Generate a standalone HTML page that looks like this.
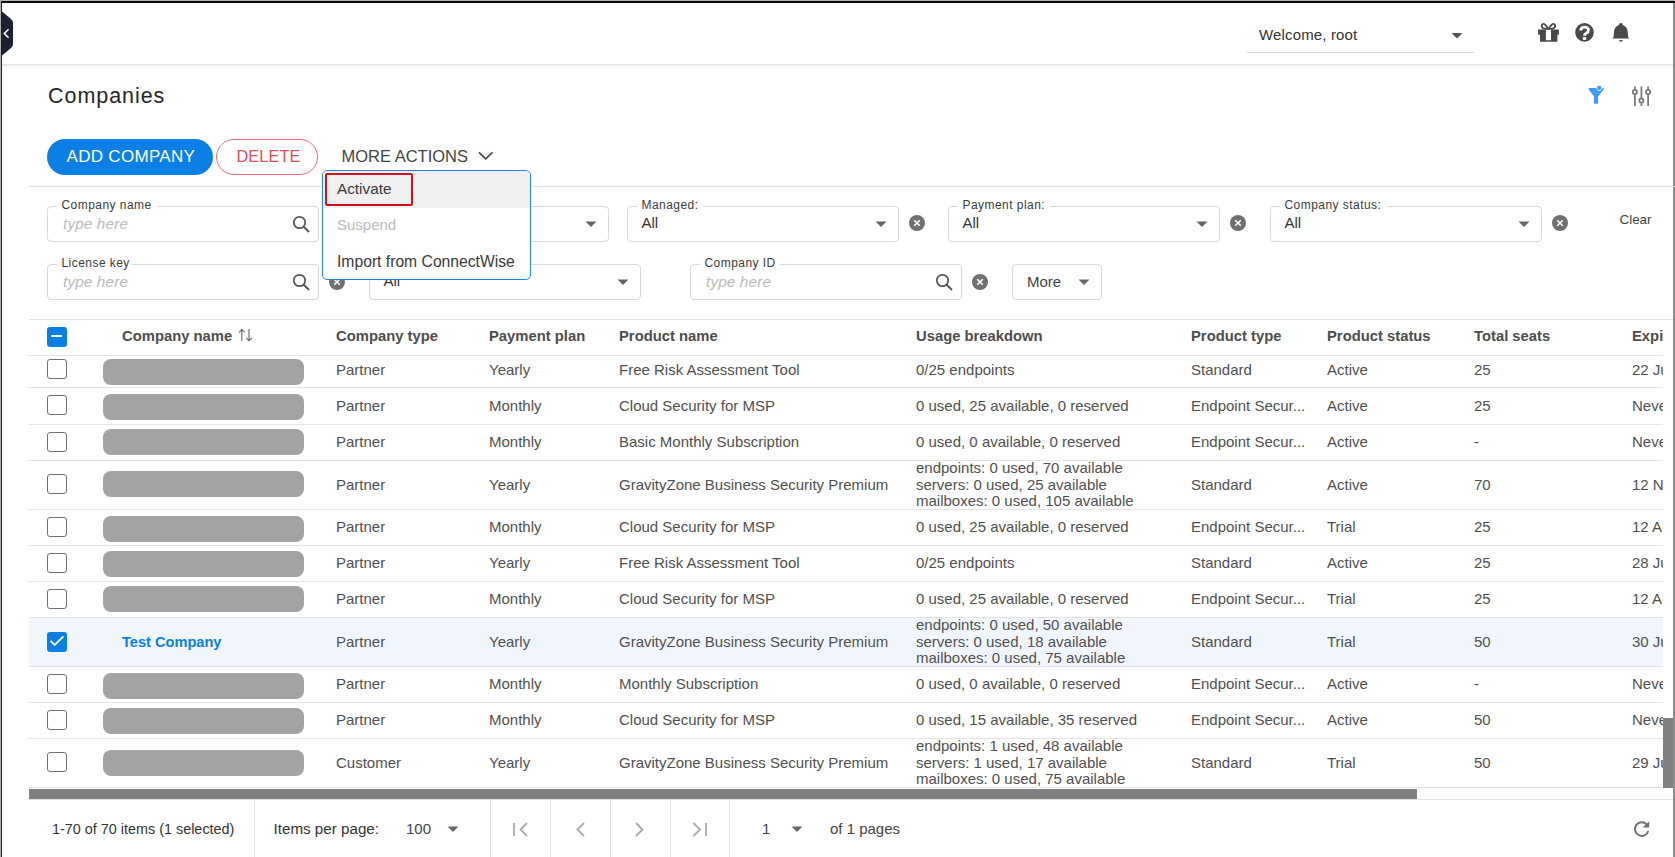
<!DOCTYPE html>
<html><head><meta charset="utf-8"><title>Companies</title>
<style>
html,body{margin:0;padding:0;background:#fff;}
body{width:1675px;height:857px;overflow:hidden;position:relative;font-family:"Liberation Sans", sans-serif;}
.t{position:absolute;white-space:nowrap;}
.b{position:absolute;}
</style></head><body>
<div class="b" style="left:0px;top:0px;width:1675px;height:1px;background:#b4b4b4"></div>
<div class="b" style="left:0px;top:1px;width:1675px;height:2px;background:#0a0a10"></div>
<div class="b" style="left:0px;top:0px;width:1px;height:857px;background:#b0b0b0"></div>
<div class="b" style="left:1px;top:1px;width:1px;height:856px;background:#1b2130"></div>
<div class="b" style="left:1673px;top:3px;width:2px;height:854px;background:#8a8a8a"></div>
<svg class="b" style="left:0;top:0" width="20" height="70"><path d="M1.5 11 L11 19 Q13 21 13 23 L13 44 Q13 46 11 48 L1.5 56 Z" fill="#1b2130"/><path d="M8.6 29.3 L4.3 33.5 L8.6 37.7" stroke="#fff" stroke-width="1.6" fill="none"/></svg>
<div class="b" style="left:2px;top:64px;width:1671px;height:1px;background:#e4e4e4"></div>
<div class="b" style="left:2px;top:65px;width:1671px;height:1px;background:#f2f2f2"></div>
<div class="b" style="left:2px;top:66px;width:1671px;height:1px;background:#f7f7f7"></div>
<div class="b" style="left:2px;top:67px;width:1671px;height:1px;background:#fbfbfb"></div>
<div class="t" style="left:1259px;top:25.40px;font-size:15px;line-height:20px;color:#333;font-weight:normal;font-style:normal;letter-spacing:0.15px;">Welcome, root</div>
<div class="b" style="left:1247px;top:52px;width:227px;height:1px;background:#d6d6d6"></div>
<svg class="b" style="left:1450px;top:32px" width="14" height="8"><path d="M1.5 1 L12.5 1 L7 6.5 Z" fill="#555"/></svg>
<svg class="b" style="left:1536px;top:21px" width="26" height="24" viewBox="0 0 26 24">
<path d="M12.4 7.9 C10.5 5 8.6 2.8 7.2 2.9 C5.6 3 5.4 5.5 6.4 6.7 C7.4 7.9 9.5 7.9 12.4 7.9 Z" fill="none" stroke="#4a4a4a" stroke-width="1.9" stroke-linejoin="round"/>
<path d="M12.5 7.9 C14.4 5 16.3 2.8 17.7 2.9 C19.3 3 19.5 5.5 18.5 6.7 C17.5 7.9 15.4 7.9 12.5 7.9 Z" fill="none" stroke="#4a4a4a" stroke-width="1.9" stroke-linejoin="round"/>
<path d="M2.1 8.5 H22.9 V13.7 H21.4 V20.7 H4 V13.7 H2.1 Z M9.9 8.5 V19.2 H15 V8.5 Z" fill="#4a4a4a" fill-rule="evenodd"/>
</svg>
<svg class="b" style="left:1574px;top:22px" width="21" height="21" viewBox="0 0 21 21">
<circle cx="10.5" cy="10.4" r="9.3" fill="#4a4a4a"/>
<path d="M6.8 8.4 C6.8 6.2 8.4 5.1 10.6 5.1 C12.9 5.1 14.5 6.3 14.5 8.2 C14.5 10 13.3 10.7 12.2 11.3 C11 12 10.5 12.5 10.5 13.8" stroke="#fff" stroke-width="2.8" fill="none"/>
<rect x="8.85" y="15.1" width="3.3" height="2.9" fill="#fff"/>
</svg>
<svg class="b" style="left:1610px;top:21px" width="22" height="23" viewBox="0 0 22 23">
<path d="M4.05 10.6 A6.8 6.8 0 0 1 17.65 10.6 L18.2 15.8 L19 17.6 L2.7 17.6 L3.5 15.8 Z" fill="#4a4a4a"/><circle cx="10.85" cy="4" r="1.95" fill="#4a4a4a"/>
<path d="M9.1 19 L12.8 19 Q12.8 20.7 10.95 20.7 Q9.1 20.7 9.1 19 Z" fill="#4a4a4a"/>
</svg>
<div class="t" style="left:48px;top:81.75px;font-size:21.5px;line-height:28px;color:#262626;font-weight:normal;font-style:normal;letter-spacing:0.95px;">Companies</div>
<svg class="b" style="left:1586px;top:84px" width="22" height="23" viewBox="0 0 22 23">
<path d="M2.6 4.4 Q2.6 3.9 3.1 3.9 L10.1 3.9 L11.6 6.3 Q12.1 6.9 13.2 6.9 Q14.6 6.9 15.1 6.2 L16.3 4.3 Q16.8 3.8 17.5 4.2 Q18.2 4.8 17.7 5.5 L12.1 12.6 L12.1 19 Q12.1 19.8 11.3 19.8 L8.8 19.8 Q8 19.8 8 19 L8 12.6 L2.7 5.2 Z" fill="#3d9bf5"/>
<circle cx="13.2" cy="3.9" r="2.1" fill="#3d9bf5"/>
</svg>
<svg class="b" style="left:1630px;top:84px" width="24" height="24" viewBox="0 0 24 24">
<g stroke="#777" stroke-width="1.75" fill="none">
<path d="M4.9 2.4 V5.2 M4.9 10.8 V21.9"/><circle cx="4.9" cy="8" r="2.1"/>
<path d="M11.4 2.4 V13.7 M11.4 19.3 V21.9"/><circle cx="11.4" cy="16.5" r="2.1"/>
<path d="M18.1 2.4 V5.2 M18.1 10.8 V21.9"/><circle cx="18.1" cy="8" r="2.1"/>
</g></svg>
<div class="b" style="left:47px;top:139px;width:166px;height:36px;background:#0a7fe5;border-radius:18px"></div>
<div class="t" style="left:66.5px;top:146.31px;font-size:17px;line-height:22px;color:#fff;font-weight:normal;font-style:normal;letter-spacing:0.3px;">ADD COMPANY</div>
<div class="b" style="left:216px;top:139px;width:102px;height:36px;border:1px solid #ef6b73;border-radius:18px;box-sizing:border-box"></div>
<div class="t" style="left:236.5px;top:146.49px;font-size:16.2px;line-height:21px;color:#e34b55;font-weight:normal;font-style:normal;letter-spacing:0.15px;">DELETE</div>
<div class="t" style="left:341.5px;top:145.78px;font-size:16.5px;line-height:21px;color:#444;font-weight:normal;font-style:normal;letter-spacing:0px;">MORE ACTIONS</div>
<svg class="b" style="left:476px;top:148px" width="20" height="14"><path d="M3 4.4 L9.7 10.9 L16.5 4.4" stroke="#444" stroke-width="1.6" fill="none"/></svg>
<div class="b" style="left:29px;top:186px;width:1646px;height:1px;background:#e2e2e2"></div>
<div class="b" style="left:47px;top:206px;width:272px;height:36px;border:1px solid #d9d9d9;border-radius:4px;box-sizing:border-box"></div>
<div class="b" style="left:57px;top:204px;width:100px;height:4px;background:#fff"></div>
<div class="t" style="left:61.5px;top:196.84px;font-size:12px;line-height:16px;color:#3c3c3c;font-weight:normal;font-style:normal;letter-spacing:0.45px;">Company name</div>
<div class="t" style="left:63px;top:213.86px;font-size:15.4px;line-height:20px;color:#bbb;font-weight:normal;font-style:italic;letter-spacing:0.1px;">type here</div>
<svg class="b" style="left:292px;top:215px" width="20" height="20" viewBox="0 0 20 20"><circle cx="7.5" cy="7.5" r="5.7" stroke="#555" stroke-width="1.7" fill="none"/><path d="M11.6 11.6 L17 17" stroke="#555" stroke-width="2"/></svg>
<div class="b" style="left:337px;top:206px;width:272px;height:36px;border:1px solid #d9d9d9;border-radius:4px;box-sizing:border-box"></div>
<div class="t" style="left:351.5px;top:212.80px;font-size:15px;line-height:20px;color:#333;font-weight:normal;font-style:normal;letter-spacing:0px;">All</div>
<svg class="b" style="left:585px;top:220.5px" width="13" height="7"><path d="M0.5 0.5 L11.5 0.5 L6 6 Z" fill="#666"/></svg>
<div class="b" style="left:627px;top:206px;width:272px;height:36px;border:1px solid #d9d9d9;border-radius:4px;box-sizing:border-box"></div>
<div class="b" style="left:637px;top:204px;width:66px;height:4px;background:#fff"></div>
<div class="t" style="left:641.5px;top:196.84px;font-size:12px;line-height:16px;color:#3c3c3c;font-weight:normal;font-style:normal;letter-spacing:0.45px;">Managed:</div>
<div class="t" style="left:641.5px;top:212.80px;font-size:15px;line-height:20px;color:#333;font-weight:normal;font-style:normal;letter-spacing:0px;">All</div>
<svg class="b" style="left:875px;top:220.5px" width="13" height="7"><path d="M0.5 0.5 L11.5 0.5 L6 6 Z" fill="#666"/></svg>
<svg class="b" style="left:908px;top:214px" width="18" height="18" viewBox="0 0 18 18"><circle cx="9" cy="9" r="8" fill="#707070"/><path d="M6.2 6.2 L11.8 11.8 M11.8 6.2 L6.2 11.8" stroke="#fff" stroke-width="1.6"/></svg>
<div class="b" style="left:948px;top:206px;width:272px;height:36px;border:1px solid #d9d9d9;border-radius:4px;box-sizing:border-box"></div>
<div class="b" style="left:958px;top:204px;width:92px;height:4px;background:#fff"></div>
<div class="t" style="left:962.5px;top:196.84px;font-size:12px;line-height:16px;color:#3c3c3c;font-weight:normal;font-style:normal;letter-spacing:0.45px;">Payment plan:</div>
<div class="t" style="left:962.5px;top:212.80px;font-size:15px;line-height:20px;color:#333;font-weight:normal;font-style:normal;letter-spacing:0px;">All</div>
<svg class="b" style="left:1196px;top:220.5px" width="13" height="7"><path d="M0.5 0.5 L11.5 0.5 L6 6 Z" fill="#666"/></svg>
<svg class="b" style="left:1229px;top:214px" width="18" height="18" viewBox="0 0 18 18"><circle cx="9" cy="9" r="8" fill="#707070"/><path d="M6.2 6.2 L11.8 11.8 M11.8 6.2 L6.2 11.8" stroke="#fff" stroke-width="1.6"/></svg>
<div class="b" style="left:1270px;top:206px;width:272px;height:36px;border:1px solid #d9d9d9;border-radius:4px;box-sizing:border-box"></div>
<div class="b" style="left:1280px;top:204px;width:107px;height:4px;background:#fff"></div>
<div class="t" style="left:1284.5px;top:196.84px;font-size:12px;line-height:16px;color:#3c3c3c;font-weight:normal;font-style:normal;letter-spacing:0.45px;">Company status:</div>
<div class="t" style="left:1284.5px;top:212.80px;font-size:15px;line-height:20px;color:#333;font-weight:normal;font-style:normal;letter-spacing:0px;">All</div>
<svg class="b" style="left:1518px;top:220.5px" width="13" height="7"><path d="M0.5 0.5 L11.5 0.5 L6 6 Z" fill="#666"/></svg>
<svg class="b" style="left:1551px;top:214px" width="18" height="18" viewBox="0 0 18 18"><circle cx="9" cy="9" r="8" fill="#707070"/><path d="M6.2 6.2 L11.8 11.8 M11.8 6.2 L6.2 11.8" stroke="#fff" stroke-width="1.6"/></svg>
<div class="t" style="left:1619.5px;top:211.16px;font-size:13.4px;line-height:17px;color:#444;font-weight:normal;font-style:normal;letter-spacing:0px;">Clear</div>
<div class="b" style="left:47px;top:264px;width:272px;height:36px;border:1px solid #d9d9d9;border-radius:4px;box-sizing:border-box"></div>
<div class="b" style="left:57px;top:262px;width:74px;height:4px;background:#fff"></div>
<div class="t" style="left:61.5px;top:254.84px;font-size:12px;line-height:16px;color:#3c3c3c;font-weight:normal;font-style:normal;letter-spacing:0.45px;">License key</div>
<div class="t" style="left:63px;top:271.86px;font-size:15.4px;line-height:20px;color:#bbb;font-weight:normal;font-style:italic;letter-spacing:0.1px;">type here</div>
<svg class="b" style="left:292px;top:273px" width="20" height="20" viewBox="0 0 20 20"><circle cx="7.5" cy="7.5" r="5.7" stroke="#555" stroke-width="1.7" fill="none"/><path d="M11.6 11.6 L17 17" stroke="#555" stroke-width="2"/></svg>
<svg class="b" style="left:328px;top:273px" width="18" height="18" viewBox="0 0 18 18"><circle cx="9" cy="9" r="8" fill="#707070"/><path d="M6.2 6.2 L11.8 11.8 M11.8 6.2 L6.2 11.8" stroke="#fff" stroke-width="1.6"/></svg>
<div class="b" style="left:369px;top:264px;width:272px;height:36px;border:1px solid #d9d9d9;border-radius:4px;box-sizing:border-box"></div>
<div class="t" style="left:383.5px;top:270.80px;font-size:15px;line-height:20px;color:#333;font-weight:normal;font-style:normal;letter-spacing:0px;">All</div>
<svg class="b" style="left:617px;top:278.5px" width="13" height="7"><path d="M0.5 0.5 L11.5 0.5 L6 6 Z" fill="#666"/></svg>
<div class="b" style="left:690px;top:264px;width:272px;height:36px;border:1px solid #d9d9d9;border-radius:4px;box-sizing:border-box"></div>
<div class="b" style="left:700px;top:262px;width:80px;height:4px;background:#fff"></div>
<div class="t" style="left:704.5px;top:254.84px;font-size:12px;line-height:16px;color:#3c3c3c;font-weight:normal;font-style:normal;letter-spacing:0.45px;">Company ID</div>
<div class="t" style="left:706px;top:271.86px;font-size:15.4px;line-height:20px;color:#bbb;font-weight:normal;font-style:italic;letter-spacing:0.1px;">type here</div>
<svg class="b" style="left:935px;top:273px" width="20" height="20" viewBox="0 0 20 20"><circle cx="7.5" cy="7.5" r="5.7" stroke="#555" stroke-width="1.7" fill="none"/><path d="M11.6 11.6 L17 17" stroke="#555" stroke-width="2"/></svg>
<svg class="b" style="left:971px;top:273px" width="18" height="18" viewBox="0 0 18 18"><circle cx="9" cy="9" r="8" fill="#707070"/><path d="M6.2 6.2 L11.8 11.8 M11.8 6.2 L6.2 11.8" stroke="#fff" stroke-width="1.6"/></svg>
<div class="b" style="left:1012px;top:264px;width:90px;height:36px;border:1px solid #d9d9d9;border-radius:4px;box-sizing:border-box"></div>
<div class="t" style="left:1027px;top:271.80px;font-size:15px;line-height:20px;color:#444;font-weight:normal;font-style:normal;letter-spacing:0px;">More</div>
<svg class="b" style="left:1078px;top:279px" width="13" height="7"><path d="M0.5 0.5 L11.5 0.5 L6 6 Z" fill="#666"/></svg>
<div class="b" style="left:29px;top:319px;width:1644px;height:1px;background:#e2e2e2"></div>
<div class="b" style="left:0;top:0;width:1663px;height:857px;overflow:hidden">
<div class="b" style="left:47px;top:327px;width:20px;height:20px;background:#0a7fe5;border-radius:3px"></div>
<div class="b" style="left:51px;top:335px;width:11px;height:2px;background:#fff"></div>
<div class="t" style="left:122px;top:326.67px;font-size:14.8px;line-height:19px;color:#4d4d4d;font-weight:bold;font-style:normal;letter-spacing:0px;">Company name</div>
<div class="t" style="left:336px;top:326.67px;font-size:14.8px;line-height:19px;color:#4d4d4d;font-weight:bold;font-style:normal;letter-spacing:0px;">Company type</div>
<div class="t" style="left:489px;top:326.67px;font-size:14.8px;line-height:19px;color:#4d4d4d;font-weight:bold;font-style:normal;letter-spacing:0px;">Payment plan</div>
<div class="t" style="left:619px;top:326.67px;font-size:14.8px;line-height:19px;color:#4d4d4d;font-weight:bold;font-style:normal;letter-spacing:0px;">Product name</div>
<div class="t" style="left:916px;top:326.67px;font-size:14.8px;line-height:19px;color:#4d4d4d;font-weight:bold;font-style:normal;letter-spacing:0px;">Usage breakdown</div>
<div class="t" style="left:1191px;top:326.67px;font-size:14.8px;line-height:19px;color:#4d4d4d;font-weight:bold;font-style:normal;letter-spacing:0px;">Product type</div>
<div class="t" style="left:1327px;top:326.67px;font-size:14.8px;line-height:19px;color:#4d4d4d;font-weight:bold;font-style:normal;letter-spacing:0px;">Product status</div>
<div class="t" style="left:1474px;top:326.67px;font-size:14.8px;line-height:19px;color:#4d4d4d;font-weight:bold;font-style:normal;letter-spacing:0px;">Total seats</div>
<div class="t" style="left:1632px;top:326.67px;font-size:14.8px;line-height:19px;color:#4d4d4d;font-weight:bold;font-style:normal;letter-spacing:0px;">Expiry date</div>
<svg class="b" style="left:237px;top:328px" width="18" height="16"><path d="M4.8 13.3 V1.4 M2.1 4.3 L4.8 1.4 L7.6 4.3 M12 1 V12.8 M9.3 10 L12 12.8 L14.8 10" stroke="#6a6a6a" stroke-width="1.15" fill="none"/></svg>
<div class="b" style="left:29px;top:355px;width:1634px;height:1px;background:#dfe3ea"></div>
<div class="b" style="left:0;top:356px;width:1663px;height:433px;overflow:hidden">
<div class="b" style="left:0;top:-356px;width:1663px;height:857px">
<div class="b" style="left:47px;top:359px;width:20px;height:20px;border:1.8px solid #707070;border-radius:3px;box-sizing:border-box"></div>
<div class="b" style="left:103px;top:359px;width:201px;height:26px;background:#a3a3a3;border-radius:8px"></div>
<div class="t" style="left:336px;top:360.00px;font-size:15px;line-height:20px;color:#505050;font-weight:normal;font-style:normal;letter-spacing:0px;">Partner</div>
<div class="t" style="left:489px;top:360.00px;font-size:15px;line-height:20px;color:#505050;font-weight:normal;font-style:normal;letter-spacing:0px;">Yearly</div>
<div class="t" style="left:619px;top:360.00px;font-size:15px;line-height:20px;color:#505050;font-weight:normal;font-style:normal;letter-spacing:0px;">Free Risk Assessment Tool</div>
<div class="t" style="left:1191px;top:360.00px;font-size:15px;line-height:20px;color:#505050;font-weight:normal;font-style:normal;letter-spacing:0px;">Standard</div>
<div class="t" style="left:1327px;top:360.00px;font-size:15px;line-height:20px;color:#505050;font-weight:normal;font-style:normal;letter-spacing:0px;">Active</div>
<div class="t" style="left:1474px;top:360.00px;font-size:15px;line-height:20px;color:#505050;font-weight:normal;font-style:normal;letter-spacing:0px;">25</div>
<div class="t" style="left:1632px;top:360.00px;font-size:15px;line-height:20px;color:#505050;font-weight:normal;font-style:normal;letter-spacing:0px;">22 Jul 2024</div>
<div class="t" style="left:916px;top:360.00px;font-size:15px;line-height:20px;color:#505050;font-weight:normal;font-style:normal;letter-spacing:0px;">0/25 endpoints</div>
<div class="b" style="left:29px;top:387px;width:1634px;height:1px;background:#e4e4e4"></div>
<div class="b" style="left:47px;top:395px;width:20px;height:20px;border:1.8px solid #707070;border-radius:3px;box-sizing:border-box"></div>
<div class="b" style="left:103px;top:394px;width:201px;height:26px;background:#a3a3a3;border-radius:8px"></div>
<div class="t" style="left:336px;top:395.50px;font-size:15px;line-height:20px;color:#505050;font-weight:normal;font-style:normal;letter-spacing:0px;">Partner</div>
<div class="t" style="left:489px;top:395.50px;font-size:15px;line-height:20px;color:#505050;font-weight:normal;font-style:normal;letter-spacing:0px;">Monthly</div>
<div class="t" style="left:619px;top:395.50px;font-size:15px;line-height:20px;color:#505050;font-weight:normal;font-style:normal;letter-spacing:0px;">Cloud Security for MSP</div>
<div class="t" style="left:1191px;top:395.50px;font-size:15px;line-height:20px;color:#505050;font-weight:normal;font-style:normal;letter-spacing:0px;">Endpoint Secur...</div>
<div class="t" style="left:1327px;top:395.50px;font-size:15px;line-height:20px;color:#505050;font-weight:normal;font-style:normal;letter-spacing:0px;">Active</div>
<div class="t" style="left:1474px;top:395.50px;font-size:15px;line-height:20px;color:#505050;font-weight:normal;font-style:normal;letter-spacing:0px;">25</div>
<div class="t" style="left:1632px;top:395.50px;font-size:15px;line-height:20px;color:#505050;font-weight:normal;font-style:normal;letter-spacing:0px;">Never</div>
<div class="t" style="left:916px;top:395.50px;font-size:15px;line-height:20px;color:#505050;font-weight:normal;font-style:normal;letter-spacing:0px;">0 used, 25 available, 0 reserved</div>
<div class="b" style="left:29px;top:424px;width:1634px;height:1px;background:#e4e4e4"></div>
<div class="b" style="left:47px;top:432px;width:20px;height:20px;border:1.8px solid #707070;border-radius:3px;box-sizing:border-box"></div>
<div class="b" style="left:103px;top:429px;width:201px;height:26px;background:#a3a3a3;border-radius:8px"></div>
<div class="t" style="left:336px;top:432.00px;font-size:15px;line-height:20px;color:#505050;font-weight:normal;font-style:normal;letter-spacing:0px;">Partner</div>
<div class="t" style="left:489px;top:432.00px;font-size:15px;line-height:20px;color:#505050;font-weight:normal;font-style:normal;letter-spacing:0px;">Monthly</div>
<div class="t" style="left:619px;top:432.00px;font-size:15px;line-height:20px;color:#505050;font-weight:normal;font-style:normal;letter-spacing:0px;">Basic Monthly Subscription</div>
<div class="t" style="left:1191px;top:432.00px;font-size:15px;line-height:20px;color:#505050;font-weight:normal;font-style:normal;letter-spacing:0px;">Endpoint Secur...</div>
<div class="t" style="left:1327px;top:432.00px;font-size:15px;line-height:20px;color:#505050;font-weight:normal;font-style:normal;letter-spacing:0px;">Active</div>
<div class="t" style="left:1474px;top:432.00px;font-size:15px;line-height:20px;color:#505050;font-weight:normal;font-style:normal;letter-spacing:0px;">-</div>
<div class="t" style="left:1632px;top:432.00px;font-size:15px;line-height:20px;color:#505050;font-weight:normal;font-style:normal;letter-spacing:0px;">Never</div>
<div class="t" style="left:916px;top:432.00px;font-size:15px;line-height:20px;color:#505050;font-weight:normal;font-style:normal;letter-spacing:0px;">0 used, 0 available, 0 reserved</div>
<div class="b" style="left:29px;top:460px;width:1634px;height:1px;background:#e4e4e4"></div>
<div class="b" style="left:47px;top:474px;width:20px;height:20px;border:1.8px solid #707070;border-radius:3px;box-sizing:border-box"></div>
<div class="b" style="left:103px;top:471px;width:201px;height:26px;background:#a3a3a3;border-radius:8px"></div>
<div class="t" style="left:336px;top:474.50px;font-size:15px;line-height:20px;color:#505050;font-weight:normal;font-style:normal;letter-spacing:0px;">Partner</div>
<div class="t" style="left:489px;top:474.50px;font-size:15px;line-height:20px;color:#505050;font-weight:normal;font-style:normal;letter-spacing:0px;">Yearly</div>
<div class="t" style="left:619px;top:474.50px;font-size:15px;line-height:20px;color:#505050;font-weight:normal;font-style:normal;letter-spacing:0px;">GravityZone Business Security Premium</div>
<div class="t" style="left:1191px;top:474.50px;font-size:15px;line-height:20px;color:#505050;font-weight:normal;font-style:normal;letter-spacing:0px;">Standard</div>
<div class="t" style="left:1327px;top:474.50px;font-size:15px;line-height:20px;color:#505050;font-weight:normal;font-style:normal;letter-spacing:0px;">Active</div>
<div class="t" style="left:1474px;top:474.50px;font-size:15px;line-height:20px;color:#505050;font-weight:normal;font-style:normal;letter-spacing:0px;">70</div>
<div class="t" style="left:1632px;top:474.50px;font-size:15px;line-height:20px;color:#505050;font-weight:normal;font-style:normal;letter-spacing:0px;">12 Nov 2024</div>
<div class="t" style="left:916px;top:458.40px;font-size:15px;line-height:20px;color:#505050;font-weight:normal;font-style:normal;letter-spacing:0px;">endpoints: 0 used, 70 available</div>
<div class="t" style="left:916px;top:474.50px;font-size:15px;line-height:20px;color:#505050;font-weight:normal;font-style:normal;letter-spacing:0px;">servers: 0 used, 25 available</div>
<div class="t" style="left:916px;top:490.60px;font-size:15px;line-height:20px;color:#505050;font-weight:normal;font-style:normal;letter-spacing:0px;">mailboxes: 0 used, 105 available</div>
<div class="b" style="left:29px;top:509px;width:1634px;height:1px;background:#e4e4e4"></div>
<div class="b" style="left:47px;top:517px;width:20px;height:20px;border:1.8px solid #707070;border-radius:3px;box-sizing:border-box"></div>
<div class="b" style="left:103px;top:516px;width:201px;height:26px;background:#a3a3a3;border-radius:8px"></div>
<div class="t" style="left:336px;top:517.00px;font-size:15px;line-height:20px;color:#505050;font-weight:normal;font-style:normal;letter-spacing:0px;">Partner</div>
<div class="t" style="left:489px;top:517.00px;font-size:15px;line-height:20px;color:#505050;font-weight:normal;font-style:normal;letter-spacing:0px;">Monthly</div>
<div class="t" style="left:619px;top:517.00px;font-size:15px;line-height:20px;color:#505050;font-weight:normal;font-style:normal;letter-spacing:0px;">Cloud Security for MSP</div>
<div class="t" style="left:1191px;top:517.00px;font-size:15px;line-height:20px;color:#505050;font-weight:normal;font-style:normal;letter-spacing:0px;">Endpoint Secur...</div>
<div class="t" style="left:1327px;top:517.00px;font-size:15px;line-height:20px;color:#505050;font-weight:normal;font-style:normal;letter-spacing:0px;">Trial</div>
<div class="t" style="left:1474px;top:517.00px;font-size:15px;line-height:20px;color:#505050;font-weight:normal;font-style:normal;letter-spacing:0px;">25</div>
<div class="t" style="left:1632px;top:517.00px;font-size:15px;line-height:20px;color:#505050;font-weight:normal;font-style:normal;letter-spacing:0px;">12 Aug 2024</div>
<div class="t" style="left:916px;top:517.00px;font-size:15px;line-height:20px;color:#505050;font-weight:normal;font-style:normal;letter-spacing:0px;">0 used, 25 available, 0 reserved</div>
<div class="b" style="left:29px;top:545px;width:1634px;height:1px;background:#e4e4e4"></div>
<div class="b" style="left:47px;top:553px;width:20px;height:20px;border:1.8px solid #707070;border-radius:3px;box-sizing:border-box"></div>
<div class="b" style="left:103px;top:551px;width:201px;height:26px;background:#a3a3a3;border-radius:8px"></div>
<div class="t" style="left:336px;top:553.00px;font-size:15px;line-height:20px;color:#505050;font-weight:normal;font-style:normal;letter-spacing:0px;">Partner</div>
<div class="t" style="left:489px;top:553.00px;font-size:15px;line-height:20px;color:#505050;font-weight:normal;font-style:normal;letter-spacing:0px;">Yearly</div>
<div class="t" style="left:619px;top:553.00px;font-size:15px;line-height:20px;color:#505050;font-weight:normal;font-style:normal;letter-spacing:0px;">Free Risk Assessment Tool</div>
<div class="t" style="left:1191px;top:553.00px;font-size:15px;line-height:20px;color:#505050;font-weight:normal;font-style:normal;letter-spacing:0px;">Standard</div>
<div class="t" style="left:1327px;top:553.00px;font-size:15px;line-height:20px;color:#505050;font-weight:normal;font-style:normal;letter-spacing:0px;">Active</div>
<div class="t" style="left:1474px;top:553.00px;font-size:15px;line-height:20px;color:#505050;font-weight:normal;font-style:normal;letter-spacing:0px;">25</div>
<div class="t" style="left:1632px;top:553.00px;font-size:15px;line-height:20px;color:#505050;font-weight:normal;font-style:normal;letter-spacing:0px;">28 Jul 2024</div>
<div class="t" style="left:916px;top:553.00px;font-size:15px;line-height:20px;color:#505050;font-weight:normal;font-style:normal;letter-spacing:0px;">0/25 endpoints</div>
<div class="b" style="left:29px;top:581px;width:1634px;height:1px;background:#e4e4e4"></div>
<div class="b" style="left:47px;top:589px;width:20px;height:20px;border:1.8px solid #707070;border-radius:3px;box-sizing:border-box"></div>
<div class="b" style="left:103px;top:586px;width:201px;height:26px;background:#a3a3a3;border-radius:8px"></div>
<div class="t" style="left:336px;top:589.00px;font-size:15px;line-height:20px;color:#505050;font-weight:normal;font-style:normal;letter-spacing:0px;">Partner</div>
<div class="t" style="left:489px;top:589.00px;font-size:15px;line-height:20px;color:#505050;font-weight:normal;font-style:normal;letter-spacing:0px;">Monthly</div>
<div class="t" style="left:619px;top:589.00px;font-size:15px;line-height:20px;color:#505050;font-weight:normal;font-style:normal;letter-spacing:0px;">Cloud Security for MSP</div>
<div class="t" style="left:1191px;top:589.00px;font-size:15px;line-height:20px;color:#505050;font-weight:normal;font-style:normal;letter-spacing:0px;">Endpoint Secur...</div>
<div class="t" style="left:1327px;top:589.00px;font-size:15px;line-height:20px;color:#505050;font-weight:normal;font-style:normal;letter-spacing:0px;">Trial</div>
<div class="t" style="left:1474px;top:589.00px;font-size:15px;line-height:20px;color:#505050;font-weight:normal;font-style:normal;letter-spacing:0px;">25</div>
<div class="t" style="left:1632px;top:589.00px;font-size:15px;line-height:20px;color:#505050;font-weight:normal;font-style:normal;letter-spacing:0px;">12 Aug 2024</div>
<div class="t" style="left:916px;top:589.00px;font-size:15px;line-height:20px;color:#505050;font-weight:normal;font-style:normal;letter-spacing:0px;">0 used, 25 available, 0 reserved</div>
<div class="b" style="left:29px;top:617px;width:1634px;height:1px;background:#e4e4e4"></div>
<div class="b" style="left:29px;top:618px;width:1634px;height:48px;background:#f1f6fd"></div>
<svg class="b" style="left:47px;top:632.1px" width="20" height="20"><rect width="20" height="20" rx="3" fill="#0a7fe5"/><path d="M3.6 8.9 L7.7 13 L16.4 4.4" stroke="#fff" stroke-width="1.9" fill="none"/></svg>
<div class="t" style="left:122px;top:632.94px;font-size:14.6px;line-height:19px;color:#0a7fe5;font-weight:bold;font-style:normal;letter-spacing:0px;">Test Company</div>
<div class="t" style="left:336px;top:631.50px;font-size:15px;line-height:20px;color:#505050;font-weight:normal;font-style:normal;letter-spacing:0px;">Partner</div>
<div class="t" style="left:489px;top:631.50px;font-size:15px;line-height:20px;color:#505050;font-weight:normal;font-style:normal;letter-spacing:0px;">Yearly</div>
<div class="t" style="left:619px;top:631.50px;font-size:15px;line-height:20px;color:#505050;font-weight:normal;font-style:normal;letter-spacing:0px;">GravityZone Business Security Premium</div>
<div class="t" style="left:1191px;top:631.50px;font-size:15px;line-height:20px;color:#505050;font-weight:normal;font-style:normal;letter-spacing:0px;">Standard</div>
<div class="t" style="left:1327px;top:631.50px;font-size:15px;line-height:20px;color:#505050;font-weight:normal;font-style:normal;letter-spacing:0px;">Trial</div>
<div class="t" style="left:1474px;top:631.50px;font-size:15px;line-height:20px;color:#505050;font-weight:normal;font-style:normal;letter-spacing:0px;">50</div>
<div class="t" style="left:1632px;top:631.50px;font-size:15px;line-height:20px;color:#505050;font-weight:normal;font-style:normal;letter-spacing:0px;">30 Jul 2024</div>
<div class="t" style="left:916px;top:615.40px;font-size:15px;line-height:20px;color:#505050;font-weight:normal;font-style:normal;letter-spacing:0px;">endpoints: 0 used, 50 available</div>
<div class="t" style="left:916px;top:631.50px;font-size:15px;line-height:20px;color:#505050;font-weight:normal;font-style:normal;letter-spacing:0px;">servers: 0 used, 18 available</div>
<div class="t" style="left:916px;top:647.60px;font-size:15px;line-height:20px;color:#505050;font-weight:normal;font-style:normal;letter-spacing:0px;">mailboxes: 0 used, 75 available</div>
<div class="b" style="left:29px;top:666px;width:1634px;height:1px;background:#e4e4e4"></div>
<div class="b" style="left:47px;top:674px;width:20px;height:20px;border:1.8px solid #707070;border-radius:3px;box-sizing:border-box"></div>
<div class="b" style="left:103px;top:673px;width:201px;height:26px;background:#a3a3a3;border-radius:8px"></div>
<div class="t" style="left:336px;top:674.00px;font-size:15px;line-height:20px;color:#505050;font-weight:normal;font-style:normal;letter-spacing:0px;">Partner</div>
<div class="t" style="left:489px;top:674.00px;font-size:15px;line-height:20px;color:#505050;font-weight:normal;font-style:normal;letter-spacing:0px;">Monthly</div>
<div class="t" style="left:619px;top:674.00px;font-size:15px;line-height:20px;color:#505050;font-weight:normal;font-style:normal;letter-spacing:0px;">Monthly Subscription</div>
<div class="t" style="left:1191px;top:674.00px;font-size:15px;line-height:20px;color:#505050;font-weight:normal;font-style:normal;letter-spacing:0px;">Endpoint Secur...</div>
<div class="t" style="left:1327px;top:674.00px;font-size:15px;line-height:20px;color:#505050;font-weight:normal;font-style:normal;letter-spacing:0px;">Active</div>
<div class="t" style="left:1474px;top:674.00px;font-size:15px;line-height:20px;color:#505050;font-weight:normal;font-style:normal;letter-spacing:0px;">-</div>
<div class="t" style="left:1632px;top:674.00px;font-size:15px;line-height:20px;color:#505050;font-weight:normal;font-style:normal;letter-spacing:0px;">Never</div>
<div class="t" style="left:916px;top:674.00px;font-size:15px;line-height:20px;color:#505050;font-weight:normal;font-style:normal;letter-spacing:0px;">0 used, 0 available, 0 reserved</div>
<div class="b" style="left:29px;top:702px;width:1634px;height:1px;background:#e4e4e4"></div>
<div class="b" style="left:47px;top:710px;width:20px;height:20px;border:1.8px solid #707070;border-radius:3px;box-sizing:border-box"></div>
<div class="b" style="left:103px;top:708px;width:201px;height:26px;background:#a3a3a3;border-radius:8px"></div>
<div class="t" style="left:336px;top:710.00px;font-size:15px;line-height:20px;color:#505050;font-weight:normal;font-style:normal;letter-spacing:0px;">Partner</div>
<div class="t" style="left:489px;top:710.00px;font-size:15px;line-height:20px;color:#505050;font-weight:normal;font-style:normal;letter-spacing:0px;">Monthly</div>
<div class="t" style="left:619px;top:710.00px;font-size:15px;line-height:20px;color:#505050;font-weight:normal;font-style:normal;letter-spacing:0px;">Cloud Security for MSP</div>
<div class="t" style="left:1191px;top:710.00px;font-size:15px;line-height:20px;color:#505050;font-weight:normal;font-style:normal;letter-spacing:0px;">Endpoint Secur...</div>
<div class="t" style="left:1327px;top:710.00px;font-size:15px;line-height:20px;color:#505050;font-weight:normal;font-style:normal;letter-spacing:0px;">Active</div>
<div class="t" style="left:1474px;top:710.00px;font-size:15px;line-height:20px;color:#505050;font-weight:normal;font-style:normal;letter-spacing:0px;">50</div>
<div class="t" style="left:1632px;top:710.00px;font-size:15px;line-height:20px;color:#505050;font-weight:normal;font-style:normal;letter-spacing:0px;">Never</div>
<div class="t" style="left:916px;top:710.00px;font-size:15px;line-height:20px;color:#505050;font-weight:normal;font-style:normal;letter-spacing:0px;">0 used, 15 available, 35 reserved</div>
<div class="b" style="left:29px;top:738px;width:1634px;height:1px;background:#e4e4e4"></div>
<div class="b" style="left:47px;top:752px;width:20px;height:20px;border:1.8px solid #707070;border-radius:3px;box-sizing:border-box"></div>
<div class="b" style="left:103px;top:750px;width:201px;height:26px;background:#a3a3a3;border-radius:8px"></div>
<div class="t" style="left:336px;top:752.50px;font-size:15px;line-height:20px;color:#505050;font-weight:normal;font-style:normal;letter-spacing:0px;">Customer</div>
<div class="t" style="left:489px;top:752.50px;font-size:15px;line-height:20px;color:#505050;font-weight:normal;font-style:normal;letter-spacing:0px;">Yearly</div>
<div class="t" style="left:619px;top:752.50px;font-size:15px;line-height:20px;color:#505050;font-weight:normal;font-style:normal;letter-spacing:0px;">GravityZone Business Security Premium</div>
<div class="t" style="left:1191px;top:752.50px;font-size:15px;line-height:20px;color:#505050;font-weight:normal;font-style:normal;letter-spacing:0px;">Standard</div>
<div class="t" style="left:1327px;top:752.50px;font-size:15px;line-height:20px;color:#505050;font-weight:normal;font-style:normal;letter-spacing:0px;">Trial</div>
<div class="t" style="left:1474px;top:752.50px;font-size:15px;line-height:20px;color:#505050;font-weight:normal;font-style:normal;letter-spacing:0px;">50</div>
<div class="t" style="left:1632px;top:752.50px;font-size:15px;line-height:20px;color:#505050;font-weight:normal;font-style:normal;letter-spacing:0px;">29 Jul 2024</div>
<div class="t" style="left:916px;top:736.40px;font-size:15px;line-height:20px;color:#505050;font-weight:normal;font-style:normal;letter-spacing:0px;">endpoints: 1 used, 48 available</div>
<div class="t" style="left:916px;top:752.50px;font-size:15px;line-height:20px;color:#505050;font-weight:normal;font-style:normal;letter-spacing:0px;">servers: 1 used, 17 available</div>
<div class="t" style="left:916px;top:768.60px;font-size:15px;line-height:20px;color:#505050;font-weight:normal;font-style:normal;letter-spacing:0px;">mailboxes: 0 used, 75 available</div>
<div class="b" style="left:29px;top:787px;width:1634px;height:1px;background:#e4e4e4"></div>
</div></div>
</div>
<div class="b" style="left:29px;top:799px;width:1644px;height:1px;background:#e2e2e2"></div>
<div class="b" style="left:29px;top:789px;width:1388px;height:10px;background:#808080"></div>
<div class="b" style="left:1663px;top:718px;width:10px;height:70px;background:#808080"></div>
<div class="t" style="left:52px;top:819.51px;font-size:14.4px;line-height:19px;color:#333;font-weight:normal;font-style:normal;letter-spacing:0px;">1-70 of 70 items (1 selected)</div>
<div class="b" style="left:254px;top:799px;width:1px;height:58px;background:#e4e4e4"></div>
<div class="b" style="left:490px;top:799px;width:1px;height:58px;background:#e4e4e4"></div>
<div class="b" style="left:550px;top:799px;width:1px;height:58px;background:#e4e4e4"></div>
<div class="b" style="left:610px;top:799px;width:1px;height:58px;background:#e4e4e4"></div>
<div class="b" style="left:670px;top:799px;width:1px;height:58px;background:#e4e4e4"></div>
<div class="b" style="left:729px;top:799px;width:1px;height:58px;background:#e4e4e4"></div>
<div class="t" style="left:273.5px;top:818.73px;font-size:15.2px;line-height:20px;color:#333;font-weight:normal;font-style:normal;letter-spacing:0px;">Items per page:</div>
<div class="t" style="left:406px;top:818.80px;font-size:15px;line-height:20px;color:#444;font-weight:normal;font-style:normal;letter-spacing:0px;">100</div>
<svg class="b" style="left:447px;top:826px" width="13" height="7"><path d="M0.5 0.5 L11.5 0.5 L6 6 Z" fill="#666"/></svg>
<svg class="b" style="left:505px;top:815px" width="210" height="28">
<g stroke="#aaa" stroke-width="1.8" fill="none">
<path d="M9 8 V21"/><path d="M22 8 L15.5 14.5 L22 21"/>
<path d="M79 8 L72.5 14.5 L79 21"/>
<path d="M131 8 L137.5 14.5 L131 21"/>
<path d="M188.5 8 L195 14.5 L188.5 21"/><path d="M201 8 V21"/>
</g></svg>
<div class="t" style="left:762px;top:818.80px;font-size:15px;line-height:20px;color:#444;font-weight:normal;font-style:normal;letter-spacing:0px;">1</div>
<svg class="b" style="left:791px;top:826px" width="13" height="7"><path d="M0.5 0.5 L11.5 0.5 L6 6 Z" fill="#666"/></svg>
<div class="t" style="left:830px;top:818.80px;font-size:15px;line-height:20px;color:#444;font-weight:normal;font-style:normal;letter-spacing:0px;">of 1 pages</div>
<svg class="b" style="left:1630px;top:818px" width="22" height="22" viewBox="0 0 22 22"><path d="M18.3 13 A6.8 6.8 0 1 1 16.6 6.3" stroke="#707070" stroke-width="1.9" fill="none"/><path d="M19.2 3.3 L19.2 9.6 L12.7 9.6 Z" fill="#707070"/></svg>
<div class="b" style="left:322px;top:170px;width:209px;height:110px;background:#fff;border:1px solid #1e88e5;border-radius:5px;box-sizing:border-box;overflow:hidden">
<div class="b" style="left:0;top:0;width:209px;height:37px;background:#f0f0f0"></div>
</div>
<div class="b" style="left:325px;top:173px;width:88px;height:33px;border:2px solid #d0101c;border-radius:2px;box-sizing:border-box"></div>
<div class="t" style="left:337px;top:178.90px;font-size:15.3px;line-height:20px;color:#3a3a3a;font-weight:normal;font-style:normal;letter-spacing:0px;">Activate</div>
<div class="t" style="left:337px;top:214.70px;font-size:15px;line-height:20px;color:#bbb;font-weight:normal;font-style:normal;letter-spacing:0px;">Suspend</div>
<div class="t" style="left:337px;top:251.56px;font-size:15.7px;line-height:20px;color:#3a3a3a;font-weight:normal;font-style:normal;letter-spacing:0px;">Import from ConnectWise</div>
</body></html>
